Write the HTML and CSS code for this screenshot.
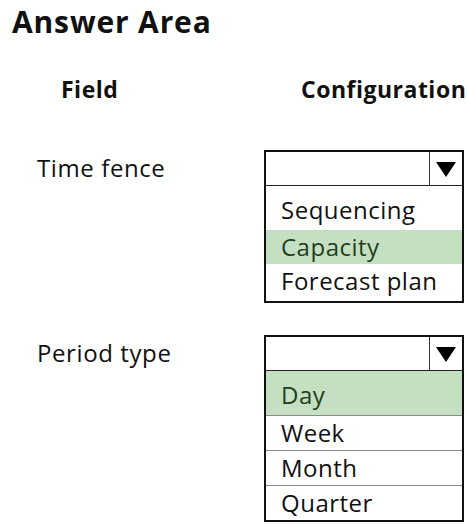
FILE: index.html
```html
<!DOCTYPE html>
<html>
<head>
<meta charset="utf-8">
<link rel="stylesheet" href="styles.css">
</head>
<body>
<div class="page">
  <h1 class="title">Answer Area</h1>
  <div class="heads">
    <div class="head-field">Field</div>
    <div class="head-config">Configuration</div>
  </div>
  <div class="row row-first">
    <div class="label">Time fence</div>
    <div class="box">
      <div class="box-head">
        <div class="box-value"></div>
        <div class="box-btn"><svg width="20" height="15" viewBox="0 0 20 15"><polygon points="0,0 20,0 10,15" fill="#000"/></svg></div>
      </div>
      <div class="list">
        <div class="opt opt-first">Sequencing</div>
        <div class="opt sel">Capacity</div>
        <div class="opt opt-last">Forecast plan</div>
      </div>
    </div>
  </div>
  <div class="row row-second">
    <div class="label">Period type</div>
    <div class="box">
      <div class="box-head">
        <div class="box-value"></div>
        <div class="box-btn"><svg width="20" height="15" viewBox="0 0 20 15"><polygon points="0,0 20,0 10,15" fill="#000"/></svg></div>
      </div>
      <div class="list lined">
        <div class="opt opt-first sel">Day</div>
        <div class="opt">Week</div>
        <div class="opt">Month</div>
        <div class="opt">Quarter</div>
      </div>
    </div>
  </div>
</div>
</body>
</html>
```
FILE: styles.css
```css
html, body {
  margin: 0;
  padding: 0;
  background: #fff;
}
body {
  font-family: "Open Sans", "Liberation Sans", sans-serif;
  color: #111;
  width: 467px;
  height: 528px;
  overflow: hidden;
}
.page {
  display: flex;
  flex-direction: column;
}
.title {
  margin: 0;
  padding: 3px 0 0 12px;
  font-size: 30px;
  font-weight: 700;
  line-height: 38px;
  letter-spacing: 0.85px;
}
.heads {
  display: grid;
  grid-template-columns: 300px 167px;
  margin-top: 33px;
  font-size: 23px;
  font-weight: 700;
  line-height: 30px;
  letter-spacing: 0.5px;
}
.head-field {
  padding-left: 61px;
}
.head-config {
  padding-left: 1px;
  white-space: nowrap;
}
.row {
  display: grid;
  grid-template-columns: 264px 200px;
  align-items: start;
}
.row-first {
  margin-top: 46px;
}
.row-second {
  margin-top: 32px;
}
.label {
  padding-left: 37px;
  font-size: 24px;
  line-height: 36px;
  letter-spacing: 0.6px;
}
.box {
  border: 2px solid #111;
  display: flex;
  flex-direction: column;
}
.box-head {
  display: flex;
  height: 33px;
  border-bottom: 1px solid #222;
}
.box-value {
  flex: 1;
}
.box-btn {
  width: 32px;
  border-left: 1px solid #333;
  display: flex;
  align-items: center;
  justify-content: center;
  padding-top: 1px;
}
.list {
  display: flex;
  flex-direction: column;
}
.opt {
  height: 34px;
  line-height: 34px;
  padding-left: 15px;
  font-size: 24px;
  letter-spacing: 0.5px;
  color: #111;
  white-space: nowrap;
}
.opt-first {
  height: 44px;
  line-height: 48px;
}
.opt-last {
  height: 37px;
  line-height: 34px;
}
.sel {
  background: #c5dfc3;
  color: #1f3f20;
}
.lined .opt + .opt {
  border-top: 1px solid #8a8a8a;
}
```
